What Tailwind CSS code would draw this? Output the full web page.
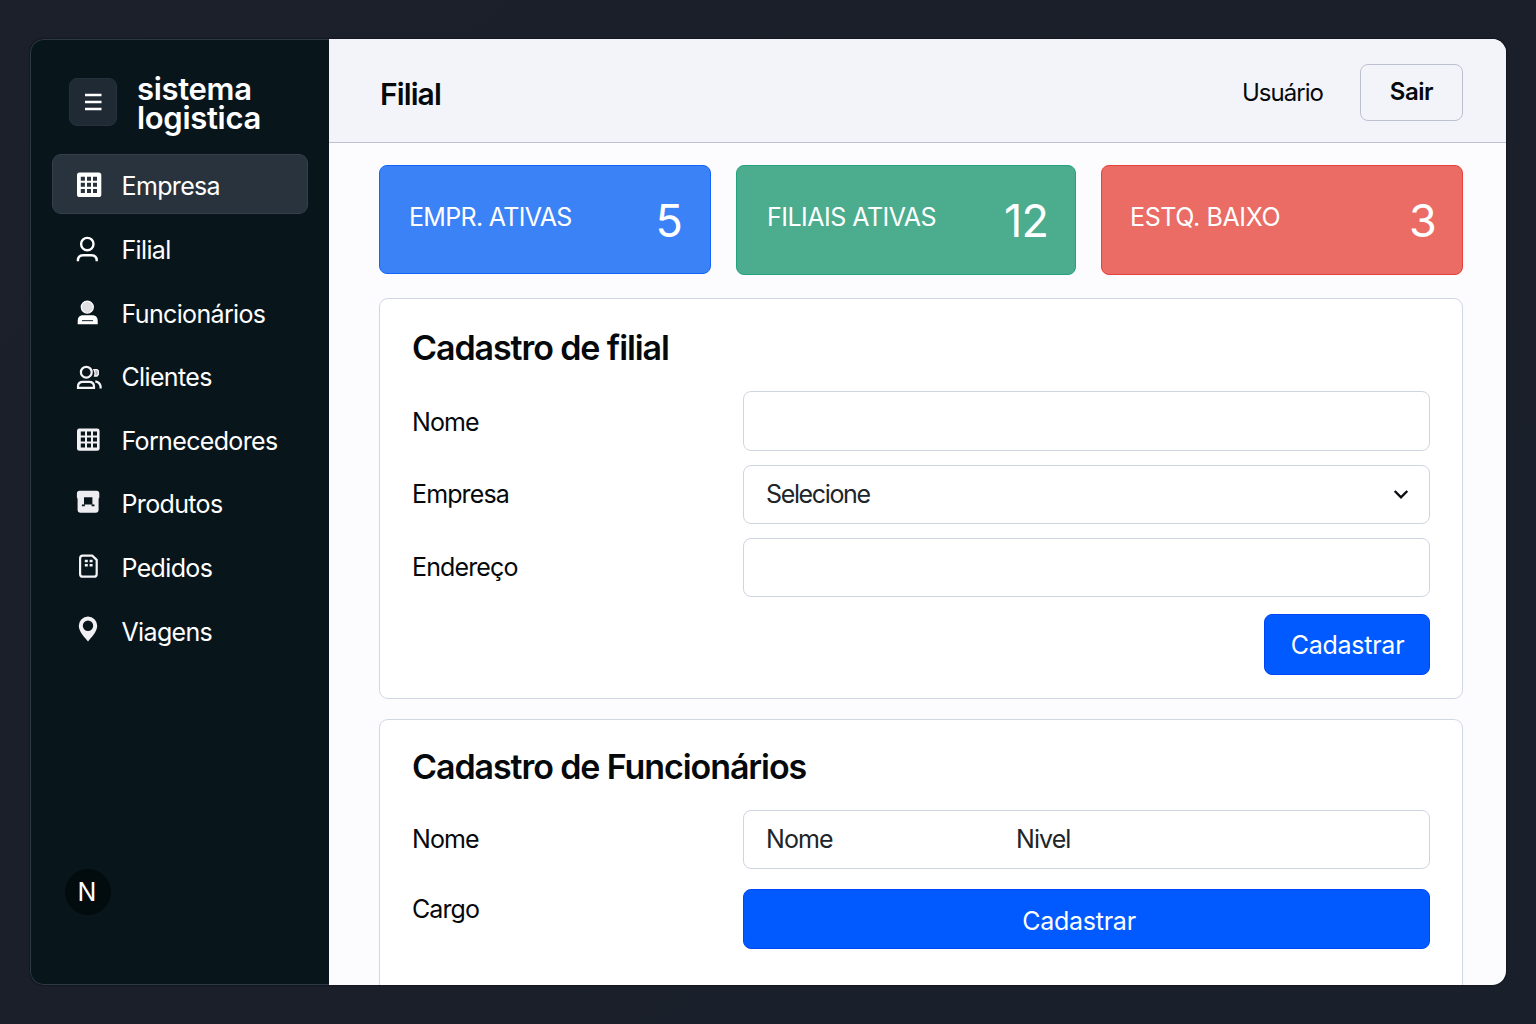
<!DOCTYPE html>
<html lang="pt-BR">
<head>
<meta charset="utf-8">
<title>Sistema Logistica</title>
<script src="https://cdn.jsdelivr.net/npm/@tailwindcss/browser@4"></script>
</head>
<body class="h-[1024px] w-[1536px] overflow-hidden bg-[#1a1f2a] bg-linear-to-br from-[#1b202b] via-[#1a1f2a] to-[#1a202b] pt-[39px] pl-[30px] font-[Inter,sans-serif] text-[25px] leading-[30px] text-[#06090c]">
<div class="flex h-[946px] w-[1476px] overflow-hidden rounded-[14px] shadow-[0_0_2px_#05070c]">

  <!-- Sidebar -->
  <aside class="flex w-[299px] shrink-0 flex-col rounded-l-[14px] border border-r-0 border-[#2b3a44] bg-[#08161c] pl-[21px] text-white">
    <div class="flex h-[114px] pt-[34px] pl-[17px]">
      <button class="mt-1 flex size-12 items-center justify-center rounded-lg border border-[#27313b] bg-[#202a34]">
        <svg class="size-6" viewBox="0 0 24 24" fill="none" stroke="#fff" stroke-width="2.6"><path d="M4 5h16.5M4 12h16.5M4 19h16.5"/></svg>
      </button>
      <div class="ml-5 text-[31px] leading-[29px] font-semibold tracking-[-0.01em]">sistema<br>logistica</div>
    </div>
    <nav class="flex w-64 flex-col gap-[3.6px] tracking-[-0.026em]">
      <a class="flex h-[60px] items-center rounded-[9px] border border-[#35404a] bg-[#29333e] pl-[22px]">
        <svg class="mr-[18.5px] size-7" viewBox="0 0 28 28"><rect x="2" y="2.5" width="24.3" height="24.5" rx="2.6" fill="#fff"/><path fill="#29333e" d="M5.8 6.7h4.1v4h-4.1zM12 6.7h4v4h-4zM18 6.7h4v4h-4zM5.8 12.8h4.1v4h-4.1zM12 12.8h4v4h-4zM18 12.8h4v4h-4zM5.8 19h4.1v4h-4.1zM12 19h4v4h-4zM18 19h4v4h-4z"/></svg>
        <span class="pt-[3px]">Empresa</span>
      </a>
      <a class="flex h-[60px] items-center pl-[23px]">
        <svg class="mr-[18.5px] size-7" viewBox="0 0 28 28" fill="none" stroke="#fff" stroke-width="2.4"><circle cx="12.3" cy="10.1" r="6.2"/><path d="M2.9 27.3v-.8c0-3.4 2.3-5.3 5.4-5.3h8c3.1 0 5.4 1.9 5.4 5.3v.8"/></svg>
        <span class="pt-[5px]">Filial</span>
      </a>
      <a class="flex h-[60px] items-center pl-[23px]">
        <svg class="mr-[18.5px] size-7" viewBox="0 0 28 28"><circle cx="12.3" cy="10.1" r="6" fill="#dfdfe4" stroke="#fff" stroke-width="1.3"/><path d="M2.7 27.2v-3.2c0-3.6 2-5.7 5.3-5.7h9.4c3.3 0 5.3 2.1 5.3 5.7v3.2z" fill="#fff"/><path d="M7 23.6h11" stroke="#3a444b" stroke-width="1.2"/></svg>
        <span class="pt-[5px]">Funcionários</span>
      </a>
      <a class="flex h-[60px] items-center pl-[23px]">
        <svg class="mr-[18.5px] size-7" viewBox="0 0 28 28" fill="none" stroke="#f4f4f6" stroke-width="2.2"><circle cx="11.3" cy="11.2" r="5.4"/><path d="M3 26.8v-1.4c0-2.8 2-4.6 4.8-4.6h6.4c2.8 0 4.8 1.8 4.8 4.6v1.4z"/><path d="M19 8.7h3l1.3 1.2v3.5l-1.3 1.6h-2.4c.8-1.8.5-4.3-.6-6.3z" fill="#aeb4b8" stroke-width="1.3"/><path d="M20.3 20.3c3 .5 4.9 2.3 5.3 5.2v1.9"/></svg>
        <span class="pt-[5px]">Clientes</span>
      </a>
      <a class="flex h-[60px] items-center pl-[23px]">
        <svg class="mr-[18.5px] size-7" viewBox="0 0 28 28"><rect x="2" y="4.6" width="22.6" height="22.2" rx="2.4" fill="#f1f1f4"/><path fill="#08161c" d="M5.8 7.6h4.2v4h-4.2zM12 7.6h4v4h-4zM18 7.6h4v4h-4zM5.8 13.6h4.2v4h-4.2zM12 13.6h4v4h-4zM18 13.6h4v4h-4zM5.8 19.6h4.2v4h-4.2zM12 19.6h4v4h-4zM18 19.6h4v4h-4z"/></svg>
        <span class="pt-[5px]">Fornecedores</span>
      </a>
      <a class="flex h-[60px] items-center pl-[23px]">
        <svg class="mr-[18.5px] size-7" viewBox="0 0 28 28"><path d="M4.6 2.7h17q2.7 0 2.7 2.7v4.1l-.7 1.3v11q0 2.9-2.9 2.9h-15.200q-2.900 0-2.900-2.900v-11l-.7-1.300v-4.100q0-2.700 2.700-2.700z" fill="#ededf1"/><path d="M9 9.200h8.400v7.400h-8.400zM6.900 16.600h2.900v1.600h-2.900zM16.600 16.600h2.900v1.600h-2.900z" fill="#08161c"/></svg>
        <span class="pt-[5px]">Produtos</span>
      </a>
      <a class="flex h-[60px] items-center pl-[23px]">
        <svg class="mr-[18.5px] size-7" viewBox="0 0 28 28"><path d="M7.7 3.6h9.500l4.500 4.300v14q0 2.800-2.800 2.800h-11q-2.800 0-2.800-2.800v-15.500q0-2.800 2.600-2.800z" fill="none" stroke="#f4f4f6" stroke-linejoin="round" stroke-width="2.200"/><path d="M9.800 7.800h3v2.400h-3zM14.600 7.800h3v2.400h-3zM9.800 12.100h3v2.400h-3zM14.600 12.100h3v2.400h-3z" fill="#f4f4f6"/></svg>
        <span class="pt-[5px]">Pedidos</span>
      </a>
      <a class="flex h-[60px] items-center pl-[23px]">
        <svg class="mr-[18.5px] size-7" viewBox="0 0 28 28"><path fill-rule="evenodd" d="M13 1.5a9.2 9.2 0 0 1 9.2 9.2c0 6-5.7 11.3-9.2 15.7-3.5-4.4-9.2-9.7-9.2-15.7a9.2 9.2 0 0 1 9.2-9.2zM13 5.6a5.2 5.2 0 1 0 0 10.4 5.2 5.2 0 0 0 0-10.4z" fill="#f1f1f4"/></svg>
        <span class="pt-[5px]">Viagens</span>
      </a>
    </nav>
    <div class="mt-auto mb-[69px] ml-[13px] flex size-[46px] items-center justify-center rounded-full bg-[#020b0d] pr-[2px]">N</div>
  </aside>

  <!-- Content -->
  <main class="flex flex-1 flex-col bg-[#fcfcff]">
    <header class="flex h-[104px] shrink-0 items-center border-b border-[#bcc1d2] bg-[#f3f4f9] pr-[43px] pl-[51px]">
      <h1 class="pt-[6px] text-[30px] leading-9 font-semibold tracking-[-0.03em]">Filial</h1>
      <span class="ml-auto pt-[5px] text-[24px] tracking-[-0.04em]">Usuário</span>
      <button class="mt-[3px] ml-[37px] h-[57px] w-[103px] rounded-lg border border-[#bcc1d2] pb-px text-[24px] font-semibold tracking-[-0.02em]">Sair</button>
    </header>

    <div class="flex min-h-0 flex-1 flex-col pt-[22px] pr-[43px] pl-[50px]">
      <section class="grid h-[110px] shrink-0 grid-cols-[332px_340px_362px] gap-[25px] text-white">
        <div class="flex h-[109px] justify-between rounded-lg border border-[#1464fb] bg-[#3c82f7] pt-[36px] pr-[28px] pl-[29px]">
          <span class="tracking-[-0.027em]">EMPR. ATIVAS</span><span class="pt-[4px] text-[45px] font-normal tracking-[-0.02em]">5</span>
        </div>
        <div class="flex justify-between rounded-lg border border-[#24a27b] bg-[#4bac8e] pt-[36px] pr-[27px] pl-[30px]">
          <span class="tracking-[-0.02em]">FILIAIS ATIVAS</span><span class="pt-[4px] text-[45px] font-normal tracking-[-0.02em]">12</span>
        </div>
        <div class="flex justify-between rounded-lg border border-[#e8403a] bg-[#ea6c65] pt-[36px] pr-[26px] pl-[28px]">
          <span class="tracking-[-0.015em]">ESTQ. BAIXO</span><span class="pt-[4px] text-[45px] font-normal tracking-[-0.02em]">3</span>
        </div>
      </section>

      <section class="mt-[23px] h-[401px] shrink-0 rounded-[9px] border border-[#d0d6e2] bg-white px-8 pt-[28px]">
        <h2 class="text-[34px] leading-[42px] font-semibold tracking-[-0.032em]">Cadastro de filial</h2>
        <form class="mt-[22px] flex flex-col gap-[14px] tracking-[-0.035em]">
          <label class="flex h-[59.5px] items-center justify-between"><span class="pt-[2px]">Nome</span><input class="h-full w-[687px] rounded-lg border border-[#cfd5e0]"></label>
          <label class="flex h-[59.5px] items-center justify-between"><span>Empresa</span>
            <span class="flex h-full w-[687px] items-center justify-between rounded-lg border border-[#cfd5e0] pr-[19px] pl-[22px] tracking-[-0.054em] text-[#20252a]">Selecione
              <svg class="size-[18px]" viewBox="0 0 18 18" fill="none" stroke="#0a0c10" stroke-width="2.4"><path d="M2.7 6l6.3 6.3 6.3-6.3"/></svg>
            </span>
          </label>
          <label class="flex h-[58.5px] items-center justify-between"><span>Endereço</span><input class="h-full w-[687px] rounded-lg border border-[#cfd5e0]"></label>
          <button type="button" class="mt-[3.5px] h-[61px] w-[166px] self-end rounded-lg border border-[#0046f5] bg-[#005aff] pl-px tracking-[-0.01em] text-white">Cadastrar</button>
        </form>
      </section>

      <section class="mt-5 h-[300px] min-h-0 rounded-t-[9px] border border-b-0 border-[#d0d6e2] bg-white px-8 pt-[26px]">
        <h2 class="text-[34px] leading-[42px] font-semibold tracking-[-0.032em]">Cadastro de Funcionários</h2>
        <form class="mt-[22px] grid grid-cols-[331px_687px] gap-y-5 tracking-[-0.037em]">
          <span class="flex h-[59px] items-center pb-[2px]">Nome</span>
          <span class="flex h-[59px] items-center rounded-lg border border-[#cfd5e0] pb-[2px] pl-[22px] text-[#20252a]"><span class="w-[250px]">Nome</span><span>Nivel</span></span>
          <span class="pt-[5px]">Cargo</span>
          <button type="button" class="h-[60px] rounded-lg border border-[#0046f5] bg-[#005aff] pt-[3px] pr-[15px] tracking-[-0.01em] text-white">Cadastrar</button>
        </form>
      </section>
    </div>
  </main>
</div>
</body>
</html>
